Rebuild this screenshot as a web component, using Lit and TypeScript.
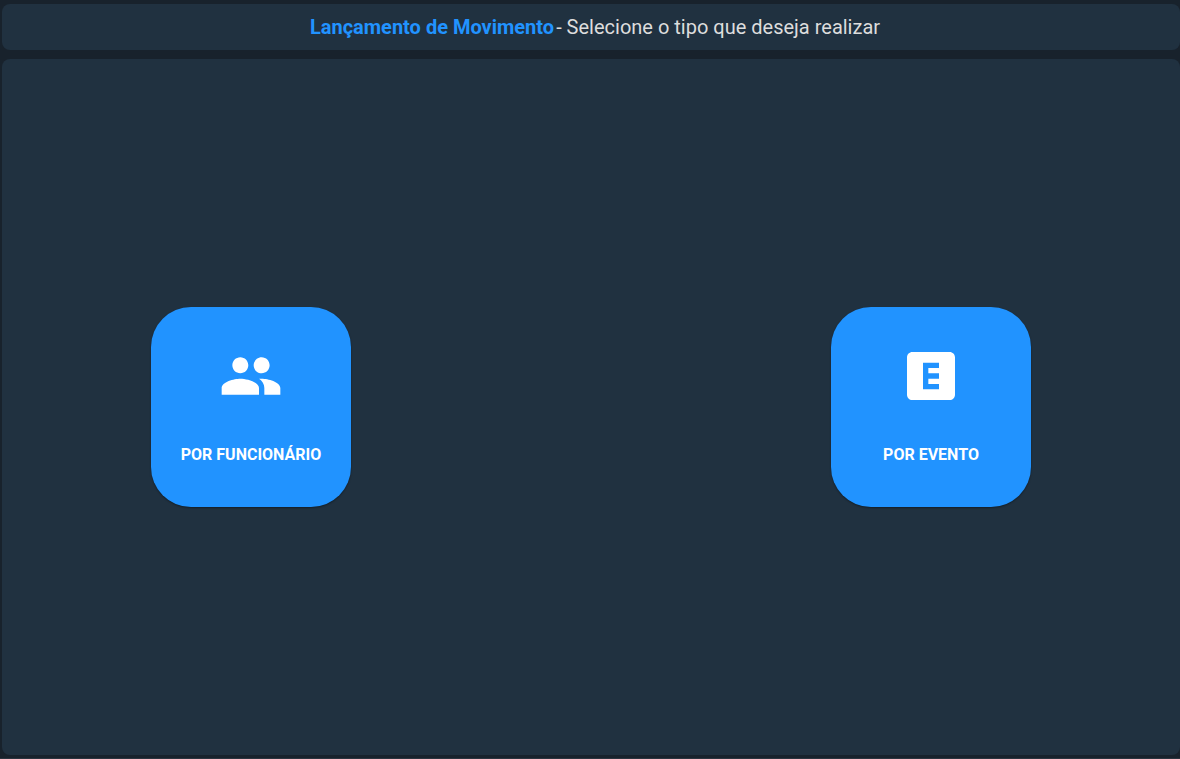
import { LitElement, html, css, svg } from "lit";
import { customElement } from "lit/decorators.js";

const peopleIcon = svg`<path d="M16 11c1.66 0 2.99-1.34 2.99-3S17.66 5 16 5c-1.66 0-3 1.34-3 3s1.34 3 3 3zm-8 0c1.66 0 2.99-1.34 2.99-3S9.66 5 8 5C6.34 5 5 6.34 5 8s1.34 3 3 3zm0 2c-2.33 0-7 1.17-7 3.5V19h14v-2.5c0-2.33-4.67-3.5-7-3.5zm8 0c-.29 0-.62.02-.97.05 1.16.84 1.97 1.97 1.97 3.45V19h6v-2.5c0-2.33-4.67-3.5-7-3.5z"/>`;
const eventIcon = svg`<path d="M19 3H5c-1.1 0-2 .9-2 2v14c0 1.1.9 2 2 2h14c1.1 0 2-.9 2-2V5c0-1.1-.9-2-2-2zm-4 6h-4v2h4v2h-4v2h4v2H9V7h6v2z"/>`;

const options = [
  { label: "POR FUNCIONÁRIO", icon: peopleIcon },
  { label: "POR EVENTO", icon: eventIcon },
];

@customElement("app-root")
export class AppRoot extends LitElement {
  static styles = css`
    :host {
      display: flex;
      flex-direction: column;
      gap: 9px;
      box-sizing: border-box;
      min-height: 100vh;
      padding: 4px 0 3px 2px;
      border-bottom: 1px solid #2b343f;
      background: #18222c;
      font-family: Roboto, sans-serif;
    }
    .header,
    .content {
      background: #203140;
      border-radius: 8px;
    }
    .header {
      display: flex;
      flex-wrap: wrap;
      justify-content: center;
      gap: 2px;
      margin: 0;
      padding: 11px 0 11px 8px;
      font-size: 20px;
      line-height: 24px;
      font-weight: 400;
      color: #dddddd;
    }
    .title {
      font-weight: 700;
      color: #2193ff;
    }
    .content {
      flex: 1;
      display: flex;
      flex-wrap: wrap;
      justify-content: space-between;
      align-items: center;
      gap: 24px;
      padding: 24px 149px;
    }
    .option {
      display: flex;
      flex-direction: column;
      align-items: center;
      gap: 37px;
      width: 200px;
      height: 200px;
      padding: 37px 0 0;
      border: 0;
      border-radius: 40px;
      background: #2193ff;
      color: #ffffff;
      font: 700 16px/20px Roboto, sans-serif;
      box-shadow: 0 1px 2px rgba(0, 0, 0, 0.4);
      cursor: pointer;
    }
    .icon {
      width: 64px;
      height: 64px;
      fill: currentColor;
    }
  `;

  render() {
    return html`
      <h1 class="header">
        <span class="title">Lançamento de Movimento</span>
        <span>- Selecione o tipo que deseja realizar</span>
      </h1>
      <main class="content">
        ${options.map(
          (option) => html`
            <button class="option" type="button">
              <svg class="icon" viewBox="0 0 24 24" aria-hidden="true">${option.icon}</svg>
              <span>${option.label}</span>
            </button>
          `
        )}
      </main>
    `;
  }
}
